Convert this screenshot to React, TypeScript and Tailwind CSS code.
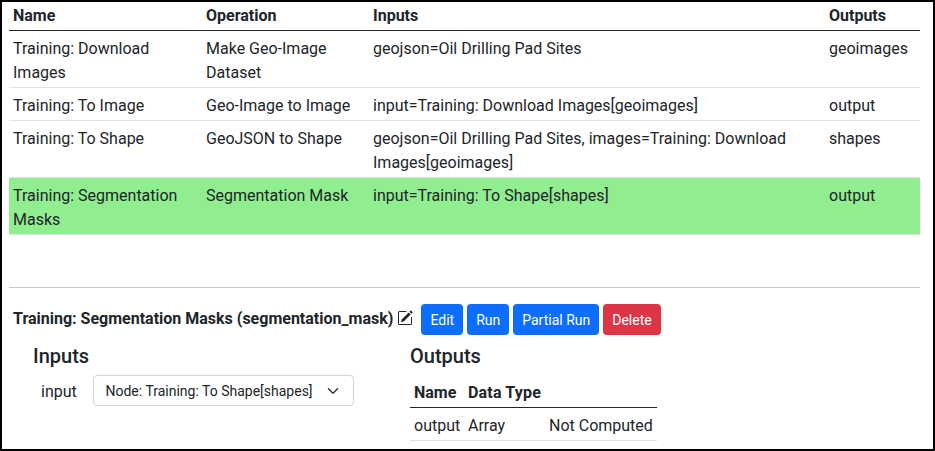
const rows = [
  { name: 'Training: Download Images', op: 'Make Geo-Image Dataset', inputs: 'geojson=Oil Drilling Pad Sites', out: 'geoimages' },
  { name: 'Training: To Image', op: 'Geo-Image to Image', inputs: 'input=Training: Download Images[geoimages]', out: 'output' },
  { name: 'Training: To Shape', op: 'GeoJSON to Shape', inputs: 'geojson=Oil Drilling Pad Sites, images=Training: Download Images[geoimages]', out: 'shapes' },
  { name: 'Training: Segmentation Masks', op: 'Segmentation Mask', inputs: 'input=Training: To Shape[shapes]', out: 'output', active: true },
];

const cols = 'grid grid-cols-[193px_167px_456px_95px]';
const cell = 'px-1 pt-1.5 pb-0.5';

function Button({ label, danger }: { label: string; danger?: boolean }) {
  return (
    <button className={`h-[31px] rounded-[4px] px-[9px] pt-0.5 text-[14px] leading-[21px] text-white ${danger ? 'bg-[#dc3545]' : 'bg-[#0d6efd]'}`}>
      {label}
    </button>
  );
}

function EditIcon() {
  return (
    <svg className="mb-[3px] ml-1 size-4" viewBox="0 0 16 16" fill="currentColor">
      <path d="M15.502 1.94a.5.5 0 0 1 0 .706L14.459 3.69l-2-2L13.502.646a.5.5 0 0 1 .707 0l1.293 1.293zm-1.75 2.456-2-2L4.939 9.21a.5.5 0 0 0-.121.196l-.805 2.414a.25.25 0 0 0 .316.316l2.414-.805a.5.5 0 0 0 .196-.12l6.813-6.814z" />
      <path fillRule="evenodd" d="M1 13.5A1.5 1.5 0 0 0 2.5 15h11a1.5 1.5 0 0 0 1.5-1.5v-6a.5.5 0 0 0-1 0v6a.5.5 0 0 1-.5.5h-11a.5.5 0 0 1-.5-.5v-11a.5.5 0 0 1 .5-.5H9a.5.5 0 0 0 0-1H2.5A1.5 1.5 0 0 0 1 2.5v11z" />
    </svg>
  );
}

export default function App() {
  return (
    <div className="h-[451px] w-[935px] overflow-hidden border-2 border-black bg-white pl-[7px] font-[Roboto,sans-serif] text-[16px] leading-6 text-[#212529]">
      <div className="w-[911px]">
        <div className={`${cols} h-[29px] border-b border-[#212529] pt-0.5 font-bold`}>
          {['Name', 'Operation', 'Inputs', 'Outputs'].map((h) => (
            <div key={h} className="px-1">{h}</div>
          ))}
        </div>
        {rows.map((r) => (
          <div key={r.name} className={`${cols} border-b border-[#dee2e6] ${r.active ? 'bg-[#90ee90]' : ''}`}>
            <div className={cell}>{r.name}</div>
            <div className={cell}>{r.op}</div>
            <div className={cell}>{r.inputs}</div>
            <div className={cell}>{r.out}</div>
          </div>
        ))}
      </div>
      <div className="mt-[52px] w-[911px] border-t border-[#c8c9ca] pt-4">
        <div className="flex h-[31px] items-center pl-1">
          <span className="pb-0.5 font-bold">Training: Segmentation Masks (segmentation_mask)</span>
          <EditIcon />
          <div className="ml-2 flex gap-1">
            <Button label="Edit" />
            <Button label="Run" />
            <Button label="Partial Run" />
            <Button label="Delete" danger />
          </div>
        </div>
      </div>
      <div className="flex pt-[9px]">
        <div className="w-[377px] pl-6">
          <h5 className="text-[20px] font-medium leading-6">Inputs</h5>
          <div className="mt-[7px] flex items-center pl-2">
            <span className="w-[52px] pt-0.5">input</span>
            <div className="flex h-[31px] w-[261px] items-center justify-between rounded-[4px] border border-[#ced4da] pl-[11.5px] pr-3 text-[14px]">
              <span>Node: Training: To Shape[shapes]</span>
              <svg className="h-3 w-4" viewBox="0 0 16 16" fill="none" stroke="#343a40" strokeWidth="2" strokeLinecap="round" strokeLinejoin="round">
                <path d="m2 5 6 6 6-6" />
              </svg>
            </div>
          </div>
        </div>
        <div className="pl-6">
          <h5 className="text-[20px] font-medium leading-6">Outputs</h5>
          <div className="mt-[7px] w-[247px]">
            <div className="grid grid-cols-[54px_81px_112px] border-b border-[#212529] pt-1.5 pb-0.5 font-bold">
              <div className="px-1">Name</div>
              <div className="whitespace-nowrap px-1 tracking-[0.17px]">Data Type</div>
              <div className="px-1" />
            </div>
            <div className="grid grid-cols-[54px_81px_112px] border-b border-[#dee2e6] pt-1.5 pb-0.5">
              <div className="px-1">output</div>
              <div className="px-1">Array</div>
              <div className="whitespace-nowrap px-1">Not Computed</div>
            </div>
          </div>
        </div>
      </div>
    </div>
  );
}
